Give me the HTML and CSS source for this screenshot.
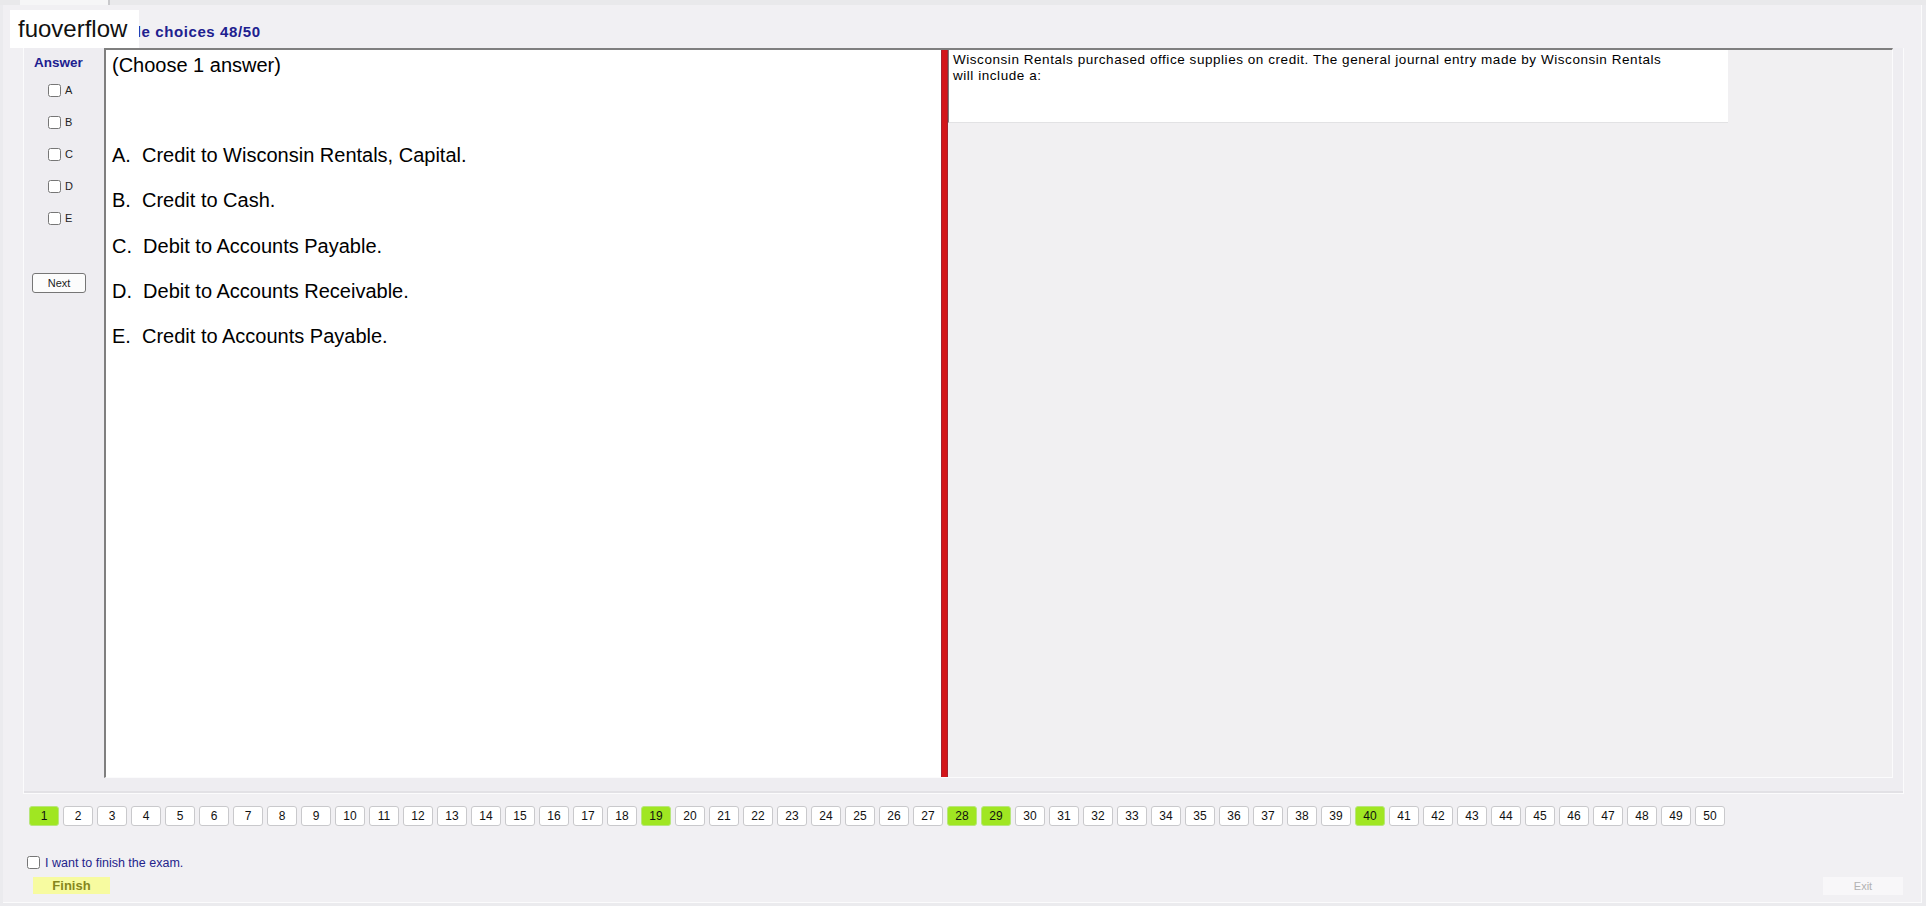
FILE: index.html
```html
<!DOCTYPE html>
<html lang="en">
<head>
    <meta charset="UTF-8">
    <meta name="viewport" content="width=device-width, initial-scale=1.0">
    <title>Multiple choices</title>
    <link rel="stylesheet" href="styles.css">
</head>
<body>
    <div class="tabs"><div class="tab"></div></div>
    <span class="brand">fuoverflow</span>
    <div class="frame">
        <div class="head">
            <h1 class="title">Multiple choices 48/50</h1>
        </div>
        <div class="group">
            <div class="answer">
                <div class="answer-title">Answer</div>
                <label class="pick"><input type="checkbox"> A</label>
                <label class="pick"><input type="checkbox"> B</label>
                <label class="pick"><input type="checkbox"> C</label>
                <label class="pick"><input type="checkbox"> D</label>
                <label class="pick"><input type="checkbox"> E</label>
                <button class="next-btn">Next</button>
            </div>
            <div class="main">
                <div class="question-pane">
                    <div class="prompt">(Choose 1 answer)</div>
                    <div class="options">
                        <div class="opt">A.&nbsp; Credit to Wisconsin Rentals, Capital.</div>
                        <div class="opt">B.&nbsp; Credit to Cash.</div>
                        <div class="opt">C.&nbsp; Debit to Accounts Payable.</div>
                        <div class="opt">D.&nbsp; Debit to Accounts Receivable.</div>
                        <div class="opt">E.&nbsp; Credit to Accounts Payable.</div>
                    </div>
                </div>
                <div class="splitter"></div>
                <div class="side-pane">
                    <div class="question-box">Wisconsin Rentals purchased office supplies on credit. The general journal entry made by Wisconsin Rentals<br>will include a:</div>
                </div>
            </div>
        </div>
        <div class="pager" id="pager"></div>
        <div class="finish-check">
            <input type="checkbox" id="finish-check">
            <label for="finish-check">I want to finish the exam.</label>
        </div>
        <div class="actions">
            <button class="finish-btn">Finish</button>
            <button class="exit-btn">Exit</button>
        </div>
    </div>
    <script>
        // question numbers, answered ones are highlighted
        const answered = [1, 19, 28, 29, 40];
        const pager = document.getElementById('pager');
        for (let i = 1; i <= 50; i++) {
            const btn = document.createElement('button');
            btn.className = 'num' + (answered.includes(i) ? ' done' : '');
            btn.textContent = i;
            pager.appendChild(btn);
        }
    </script>
</body>
</html>
```

FILE: styles.css
```css
body {
    margin: 0;
    font-family: "Liberation Sans", Arial, sans-serif;
    background-color: #ebebee;
    color: #000;
}

.tabs {
    height: 5px;
    overflow: hidden;
    background-color: #e9e9eb;
}

.tab {
    width: 88px;
    height: 5px;
    margin-left: 20px;
    background-color: #f6f6f7;
    border-right: 2px solid #c9c9cc;
}

.brand {
    position: absolute;
    z-index: 2;
    left: 10px;
    top: 10px;
    width: 121px;
    height: 38px;
    padding-left: 8px;
    background-color: #fff;
    font-size: 24px;
    line-height: 38px;
    color: #111;
}

.frame {
    box-sizing: border-box;
    width: 1919px;
    height: 898px;
    margin-left: 3px;
    padding: 0 17px 0 20px;
    background-color: #f1f0f3;
    border-right: 1px solid #fbfbfc;
    border-bottom: 1px solid #fbfbfc;
}

.head {
    height: 43px;
}

.title {
    margin: 0;
    padding: 18px 0 0 66px;
    font-size: 15px;
    line-height: 18px;
    letter-spacing: 0.6px;
    font-weight: bold;
    color: #20208f;
}

.group {
    box-sizing: border-box;
    display: flex;
    height: 746px;
    padding-right: 10px;
    background-color: #eeedf1;
    border-left: 1px solid #fbfbfc;
    border-right: 1px solid #fbfbfc;
    border-bottom: 1px solid #fbfbfc;
    box-shadow: inset 0 -2px 0 #e2e1e5;
}

.answer {
    display: flex;
    flex-direction: column;
    align-items: flex-start;
    width: 80px;
    padding-left: 8px;
    box-sizing: border-box;
}

.answer-title {
    margin-top: 7px;
    padding-left: 2px;
    font-size: 13.5px;
    line-height: 16px;
    font-weight: bold;
    color: #20208f;
}

.pick {
    display: flex;
    align-items: center;
    height: 32px;
    padding-left: 16px;
    font-size: 11px;
    color: #222;
}

.pick:first-of-type {
    margin-top: 3px;
}

.pick input {
    width: 13px;
    height: 13px;
    margin: 0 4px 0 0;
}

.next-btn {
    width: 54px;
    height: 20px;
    margin-top: 39px;
    padding: 0;
    font-family: inherit;
    font-size: 11px;
    color: #222;
    background-color: #fcfcfc;
    border: 1px solid #767676;
    border-radius: 3px;
}

.main {
    box-sizing: border-box;
    display: flex;
    width: 1790px;
    height: 730px;
    border-top: 2px solid #7f7f7f;
    border-left: 2px solid #7f7f7f;
    border-right: 1px solid #fbfbfc;
    border-bottom: 1px solid #fbfbfc;
}

.question-pane {
    flex: 0 0 835px;
    box-sizing: border-box;
    padding-left: 6px;
    background-color: #fff;
}

.prompt {
    font-size: 20px;
    line-height: 30px;
}

.options {
    margin-top: 53px;
}

.opt {
    font-size: 20px;
    line-height: 45.3px;
}

.splitter {
    flex: 0 0 7px;
    background-color: #d3151a;
    box-shadow: inset 1px 0 #a32230, inset -1px 0 #a32230;
}

.side-pane {
    flex: 1;
    background-color: #f1f0f2;
}

.question-box {
    box-sizing: border-box;
    width: 780px;
    height: 73px;
    padding: 2px 4px;
    background-color: #fff;
    border-left: 1px solid #7c7c7c;
    border-bottom: 1px solid #e2e2e4;
    font-size: 13.5px;
    line-height: 15.5px;
    letter-spacing: 0.55px;
}

.pager {
    display: flex;
    gap: 4px;
    margin-top: 12px;
    padding-left: 6px;
}

.num {
    box-sizing: border-box;
    width: 30px;
    height: 20px;
    padding: 0;
    font-family: inherit;
    font-size: 12px;
    color: #111;
    background-color: #fff;
    border: 1px solid #c9c9cc;
    border-radius: 3px;
}

.num.done {
    background-color: #a0e622;
    border-color: #b7e67a;
}

.finish-check {
    display: flex;
    align-items: center;
    height: 13px;
    margin-top: 30px;
}

.finish-check input {
    width: 13px;
    height: 13px;
    margin: 0 0 0 4px;
}

.finish-check label {
    margin-left: 5px;
    font-size: 12.5px;
    color: #24248c;
}

.actions {
    display: flex;
    justify-content: space-between;
    margin-top: 8px;
}

.finish-btn {
    width: 77px;
    height: 17px;
    margin-left: 10px;
    padding: 0;
    font-family: inherit;
    font-size: 13px;
    font-weight: bold;
    color: #86861c;
    background-color: #f7fba0;
    border: none;
}

.exit-btn {
    width: 80px;
    height: 18px;
    margin-right: 1px;
    padding: 0;
    font-family: inherit;
    font-size: 11px;
    color: #b2b2b2;
    background-color: #f8f7f9;
    border: none;
}
```
